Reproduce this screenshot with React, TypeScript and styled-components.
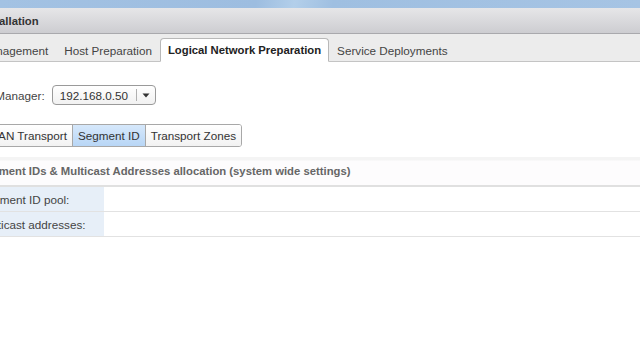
import { createGlobalStyle, styled } from 'styled-components'

const GlobalStyle = createGlobalStyle`
  html, body {
    margin: 0;
    padding: 0;
    background: #fff;
  }
  body {
    font-family: "Liberation Sans", Arial, sans-serif;
    font-size: 11.7px;
    color: #333;
  }
`

const tabs = ['Management', 'Host Preparation', 'Logical Network Preparation', 'Service Deployments']
const subTabs = ['VXLAN Transport', 'Segment ID', 'Transport Zones']
const rows = ['Segment ID pool:', 'Multicast addresses:']

export default function App() {
  return (
    <>
      <GlobalStyle />
      <Viewport>
        <TopBand />
        <Page>
          <TitleBar>Installation</TitleBar>
          <TabBar>
            {tabs.map((t) => (
              <Tab key={t} $active={t === 'Logical Network Preparation'}>
                {t}
              </Tab>
            ))}
          </TabBar>
          <Content>
            <ManagerRow>
              <span>NSX Manager:</span>
              <Select>
                <SelectValue>192.168.0.50</SelectValue>
                <SelectArrow>
                  <svg width="8" height="5" viewBox="0 0 8 5">
                    <path d="M0.5 0.5 L7.5 0.5 L4 4.5 Z" fill="#333" />
                  </svg>
                </SelectArrow>
              </Select>
            </ManagerRow>
            <ButtonGroup>
              {subTabs.map((s) => (
                <GroupButton key={s} $active={s === 'Segment ID'}>
                  {s}
                </GroupButton>
              ))}
            </ButtonGroup>
          </Content>
          <SectionHeader>Segment IDs &amp; Multicast Addresses allocation (system wide settings)</SectionHeader>
          <Table>
            {rows.map((r) => (
              <Row key={r}>
                <Label>{r}</Label>
                <Value />
              </Row>
            ))}
          </Table>
        </Page>
      </Viewport>
    </>
  )
}

const Viewport = styled.div`
  width: 640px;
  height: 360px;
  overflow: hidden;
  background: #fff;
`

const TopBand = styled.div`
  height: 8px;
  background: linear-gradient(100deg, #a3c2e3 0%, #9dbde0 40%, #b3cfea 46%, #9fbfe1 52%, #a6c4e4 100%);
`

const Page = styled.div`
  margin-left: -30px;
  width: 670px;
`

const TitleBar = styled.div`
  height: 25px;
  display: flex;
  align-items: center;
  padding-left: 9px;
  font-weight: bold;
  font-size: 11.3px;
  color: #333;
  background: linear-gradient(#e6e6e8, #cdcdd1);
  border-bottom: 1px solid #a9a9ad;
`

const TabBar = styled.div`
  height: 27px;
  display: flex;
  align-items: flex-end;
  padding-left: 2px;
  background: #ececec;
  border-bottom: 1px solid #c4c4c4;
`

const Tab = styled.div<{ $active?: boolean }>`
  height: 24px;
  display: flex;
  align-items: center;
  padding: 0 7px;
  margin-bottom: -1px;
  box-sizing: border-box;
  font-weight: ${(p) => (p.$active ? 'bold' : 'normal')};
  font-size: ${(p) => (p.$active ? '11.3px' : '11.7px')};
  color: ${(p) => (p.$active ? '#222' : '#444')};
  background: ${(p) => (p.$active ? '#fff' : 'transparent')};
  border: 1px solid ${(p) => (p.$active ? '#b8b8b8' : 'transparent')};
  border-bottom: 1px solid ${(p) => (p.$active ? '#fff' : 'transparent')};
  border-radius: 4px 4px 0 0;
`

const Content = styled.div`
  padding: 23px 0 0 2px;
  display: flex;
  flex-direction: column;
  gap: 19px;
`

const ManagerRow = styled.div`
  display: flex;
  align-items: center;
  gap: 7px;
  margin-left: -4px;
  color: #444;
`

const Select = styled.div`
  height: 20px;
  width: 104px;
  box-sizing: border-box;
  display: flex;
  align-items: stretch;
  border: 1px solid #9a9a9a;
  border-radius: 4px;
  background: linear-gradient(#ffffff, #f1f1f1);
`

const SelectValue = styled.div`
  flex: 1;
  display: flex;
  align-items: center;
  padding-left: 7px;
  color: #333;
  border-right: 1px solid #b0b0b0;
  margin: 3px 0;
`

const SelectArrow = styled.div`
  width: 18px;
  display: flex;
  align-items: center;
  justify-content: center;
`

const ButtonGroup = styled.div`
  display: flex;
  align-self: flex-start;
  margin-left: -2px;
  border: 1px solid #a8a8a8;
  border-radius: 3px;
  overflow: hidden;
`

const GroupButton = styled.div<{ $active?: boolean }>`
  height: 21px;
  display: flex;
  align-items: center;
  padding: 0 5px;
  color: #333;
  background: ${(p) => (p.$active ? 'linear-gradient(#d6e8fb, #b8d6f6)' : 'linear-gradient(#ffffff, #f2f2f2)')};
  & + & {
    border-left: 1px solid #a8a8a8;
  }
`

const SectionHeader = styled.div`
  margin-top: 10px;
  height: 28px;
  display: flex;
  align-items: center;
  padding-left: 8px;
  font-weight: bold;
  font-size: 11.3px;
  color: #666;
  background: linear-gradient(#f4f4f4 0px, #f4f4f4 3px, #fdfcfd 4px, #fdfcfd 100%);
  border-bottom: 2px solid #e0e0e0;
`

const Table = styled.div`
  display: flex;
  flex-direction: column;
`

const Row = styled.div`
  height: 24px;
  display: flex;
  border-bottom: 1px solid #e2e2e2;
`

const Label = styled.div`
  width: 134px;
  padding-left: 9px;
  box-sizing: border-box;
  display: flex;
  align-items: center;
  color: #444;
  background: #e7eff8;
`

const Value = styled.div`
  flex: 1;
  background: #fff;
`
